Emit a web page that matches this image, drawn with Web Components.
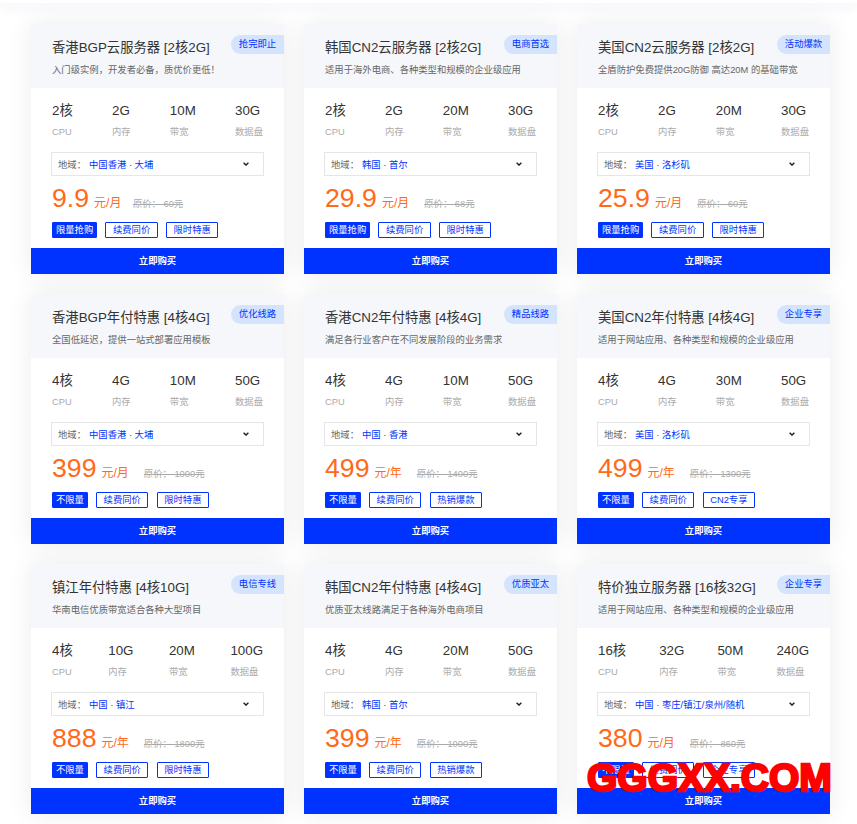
<!DOCTYPE html>
<html lang="zh">
<head>
<meta charset="utf-8">
<title>云服务器特惠</title>
<style>
    html, body { margin: 0; background: #fff; }
    body { font-family: "Liberation Sans", "Noto Sans CJK SC", sans-serif; }
</style>
</head>
<body>
<top-shade></top-shade>
<card-grid id="grid"></card-grid>
<water-mark>GGGXX.COM</water-mark>

<script>
const BLUE = '#0033ff';

class TopShade extends HTMLElement {
    constructor() {
        super();
        this.attachShadow({ mode: 'open' }).innerHTML = `
            <style>
                :host { display: block; height: 3px; background: #fff; position: relative; z-index: 2; box-shadow: 0 3px 12px rgba(40, 50, 120, .13); }
            </style>`;
    }
}

class CardGrid extends HTMLElement {
    constructor() {
        super();
        this.attachShadow({ mode: 'open' }).innerHTML = `
            <style>
                :host { display: grid; grid-template-columns: repeat(3, 253px); grid-auto-rows: 250px; gap: 20px; padding: 21px 27px 10px 31px; }
            </style>
            <slot></slot>`;
    }
}

class SpecItem extends HTMLElement {
    constructor() {
        super();
        this.attachShadow({ mode: 'open' }).innerHTML = `
            <style>
                :host { display: flex; flex-direction: column; }
                .value { font-size: 13.33px; line-height: 20px; color: #333; }
                .label { font-size: 9.33px; line-height: 14px; margin-top: 4px; color: #aaa; }
            </style>
            <span class="value"><slot></slot></span>
            <span class="label"><slot name="label"></slot></span>`;
    }
}

class RegionSelect extends HTMLElement {
    constructor() {
        super();
        this.attachShadow({ mode: 'open' }).innerHTML = `
            <style>
                :host { display: flex; align-items: center; box-sizing: border-box; height: 24px; padding: 0 14px 0 6px; border: 1px solid #e6e6e6; font-size: 9.33px; color: #666; }
                .value { margin-left: 3px; color: ${BLUE}; flex: 1; }
                svg { display: block; }
            </style>
            <span>地域：</span>
            <span class="value"><slot></slot></span>
            <svg width="6" height="4" viewBox="0 0 6 4"><path d="M.6 .7 L3 3.1 L5.4 .7" fill="none" stroke="#222" stroke-width="1.4"/></svg>`;
    }
}

class TagChip extends HTMLElement {
    constructor() {
        super();
        this.attachShadow({ mode: 'open' }).innerHTML = `
            <style>
                :host { display: block; box-sizing: border-box; height: 16px; line-height: 14px; padding: 0 6.5px; border: 1px solid ${BLUE}; border-radius: 1px; font-size: 9.33px; color: ${BLUE}; white-space: nowrap; }
                :host([solid]) { padding: 0 2.9px; background: ${BLUE}; color: #fff; }
            </style>
            <slot></slot>`;
    }
}

class VpsCard extends HTMLElement {
    constructor() {
        super();
        this.attachShadow({ mode: 'open' }).innerHTML = `
            <style>
                :host { display: flex; flex-direction: column; position: relative; background: #fff; box-shadow: 0 0 24px rgba(0, 0, 0, .08); }
                header { box-sizing: border-box; height: 64px; padding: 14px 21px 0; background: #f5f7fa; }
                .name { font-size: 13.33px; line-height: 20px; color: #333; white-space: nowrap; }
                .desc { font-size: 9.33px; line-height: 14px; margin-top: 5px; color: #666; white-space: nowrap; }
                .ribbon { position: absolute; top: 11px; right: 0; box-sizing: border-box; width: 53px; height: 19px; line-height: 18px; text-align: center; border-radius: 10px 0 0 10px; background: #d4e4fd; font-size: 9.33px; color: ${BLUE}; white-space: nowrap; }
                .specs { display: flex; justify-content: space-between; padding: 13px 21px 0; }
                .region { padding: 13px 20px 0; }
                .price { display: flex; align-items: baseline; padding: 6px 21px 0; height: 36px; box-sizing: border-box; color: #ff6a1a; }
                .num { font-size: 26.67px; line-height: 32px; }
                .unit { font-size: 12px; margin-left: 5px; }
                .old { font-size: 9.33px; margin-left: var(--old-gap, 15px); color: #aaa; text-decoration: line-through; white-space: nowrap; }
                .tags { display: flex; gap: 8.3px; padding: 10px 21px 0; }
                .buy { margin-top: auto; height: 26px; line-height: 26px; text-align: center; background: ${BLUE}; color: #fff; font-size: 9.33px; font-weight: 700; }
            </style>
            <header>
                <div class="name"><slot name="name"></slot></div>
                <div class="desc"><slot name="desc"></slot></div>
            </header>
            <div class="ribbon"><slot name="ribbon"></slot></div>
            <div class="specs"><slot name="spec"></slot></div>
            <div class="region"><slot name="region"></slot></div>
            <div class="price">
                <span class="num"><slot name="price"></slot></span>
                <span class="unit"><slot name="unit"></slot></span>
                <span class="old"><slot name="old"></slot></span>
            </div>
            <div class="tags"><slot name="tag"></slot></div>
            <div class="buy">立即购买</div>`;
    }
}

class WaterMark extends HTMLElement {
    constructor() {
        super();
        this.attachShadow({ mode: 'open' }).innerHTML = `
            <style>
                :host { position: absolute; left: 587px; top: 755px; font-family: "Liberation Sans", sans-serif; font-weight: 700; font-size: 39px; line-height: 46px; color: #ff0000; -webkit-text-stroke: 2.4px #ff0000; white-space: nowrap; z-index: 5; }
            </style>
            <slot></slot>`;
    }
}

customElements.define('top-shade', TopShade);
customElements.define('card-grid', CardGrid);
customElements.define('spec-item', SpecItem);
customElements.define('region-select', RegionSelect);
customElements.define('tag-chip', TagChip);
customElements.define('vps-card', VpsCard);
customElements.define('water-mark', WaterMark);

const cards = [
    ['香港BGP云服务器 [2核2G]', '入门级实例，开发者必备，质优价更低！', '抢完即止', ['2核', '2G', '10M', '30G'], '中国香港 · 大埔', '9.9', '元/月', '原价： 60元', ['限量抢购', '续费同价', '限时特惠']],
    ['韩国CN2云服务器 [2核2G]', '适用于海外电商、各种类型和规模的企业级应用', '电商首选', ['2核', '2G', '20M', '30G'], '韩国 · 首尔', '29.9', '元/月', '原价： 68元', ['限量抢购', '续费同价', '限时特惠']],
    ['美国CN2云服务器 [2核2G]', '全盾防护免费提供20G防御 高达20M 的基础带宽', '活动爆款', ['2核', '2G', '20M', '30G'], '美国 · 洛杉矶', '25.9', '元/月', '原价： 60元', ['限量抢购', '续费同价', '限时特惠']],
    ['香港BGP年付特惠 [4核4G]', '全国低延迟，提供一站式部署应用模板', '优化线路', ['4核', '4G', '10M', '50G'], '中国香港 · 大埔', '399', '元/月', '原价： 1000元', ['不限量', '续费同价', '限时特惠']],
    ['香港CN2年付特惠 [4核4G]', '满足各行业客户在不同发展阶段的业务需求', '精品线路', ['4核', '4G', '10M', '50G'], '中国 · 香港', '499', '元/年', '原价： 1400元', ['不限量', '续费同价', '热销爆款']],
    ['美国CN2年付特惠 [4核4G]', '适用于网站应用、各种类型和规模的企业级应用', '企业专享', ['4核', '4G', '30M', '50G'], '美国 · 洛杉矶', '499', '元/年', '原价： 1300元', ['不限量', '续费同价', 'CN2专享']],
    ['镇江年付特惠 [4核10G]', '华南电信优质带宽适合各种大型项目', '电信专线', ['4核', '10G', '20M', '100G'], '中国 · 镇江', '888', '元/年', '原价： 1800元', ['不限量', '续费同价', '限时特惠']],
    ['韩国CN2年付特惠 [4核4G]', '优质亚太线路满足于各种海外电商项目', '优质亚太', ['4核', '4G', '20M', '50G'], '韩国 · 首尔', '399', '元/年', '原价： 1000元', ['不限量', '续费同价', '热销爆款']],
    ['特价独立服务器 [16核32G]', '适用于网站应用、各种类型和规模的企业级应用', '企业专享', ['16核', '32G', '50M', '240G'], '中国 · 枣庄/镇江/泉州/随机', '380', '元/月', '原价： 860元', ['不限量', '续费同价', '企业专享']],
];
const labels = ['CPU', '内存', '带宽', '数据盘'];

let grid = document.getElementById('grid');
for (const [name, desc, ribbon, specs, region, price, unit, old, tags] of cards) {
    let card = document.createElement('vps-card');
    // the 9.9 card sits a little tighter than the others
    if (price == '9.9') card.style.setProperty('--old-gap', '11.5px');
    card.innerHTML = `
        <span slot="name">${name}</span>
        <span slot="desc">${desc}</span>
        <span slot="ribbon">${ribbon}</span>
        ${specs.map((s, i) => `<spec-item slot="spec">${s}<span slot="label">${labels[i]}</span></spec-item>`).join('')}
        <region-select slot="region">${region}</region-select>
        <span slot="price">${price}</span>
        <span slot="unit">${unit}</span>
        <span slot="old">${old}</span>
        ${tags.map((t, i) => `<tag-chip slot="tag"${i == 0 ? ' solid' : ''}>${t}</tag-chip>`).join('')}`;
    grid.appendChild(card);
}
</script>
</body>
</html>
